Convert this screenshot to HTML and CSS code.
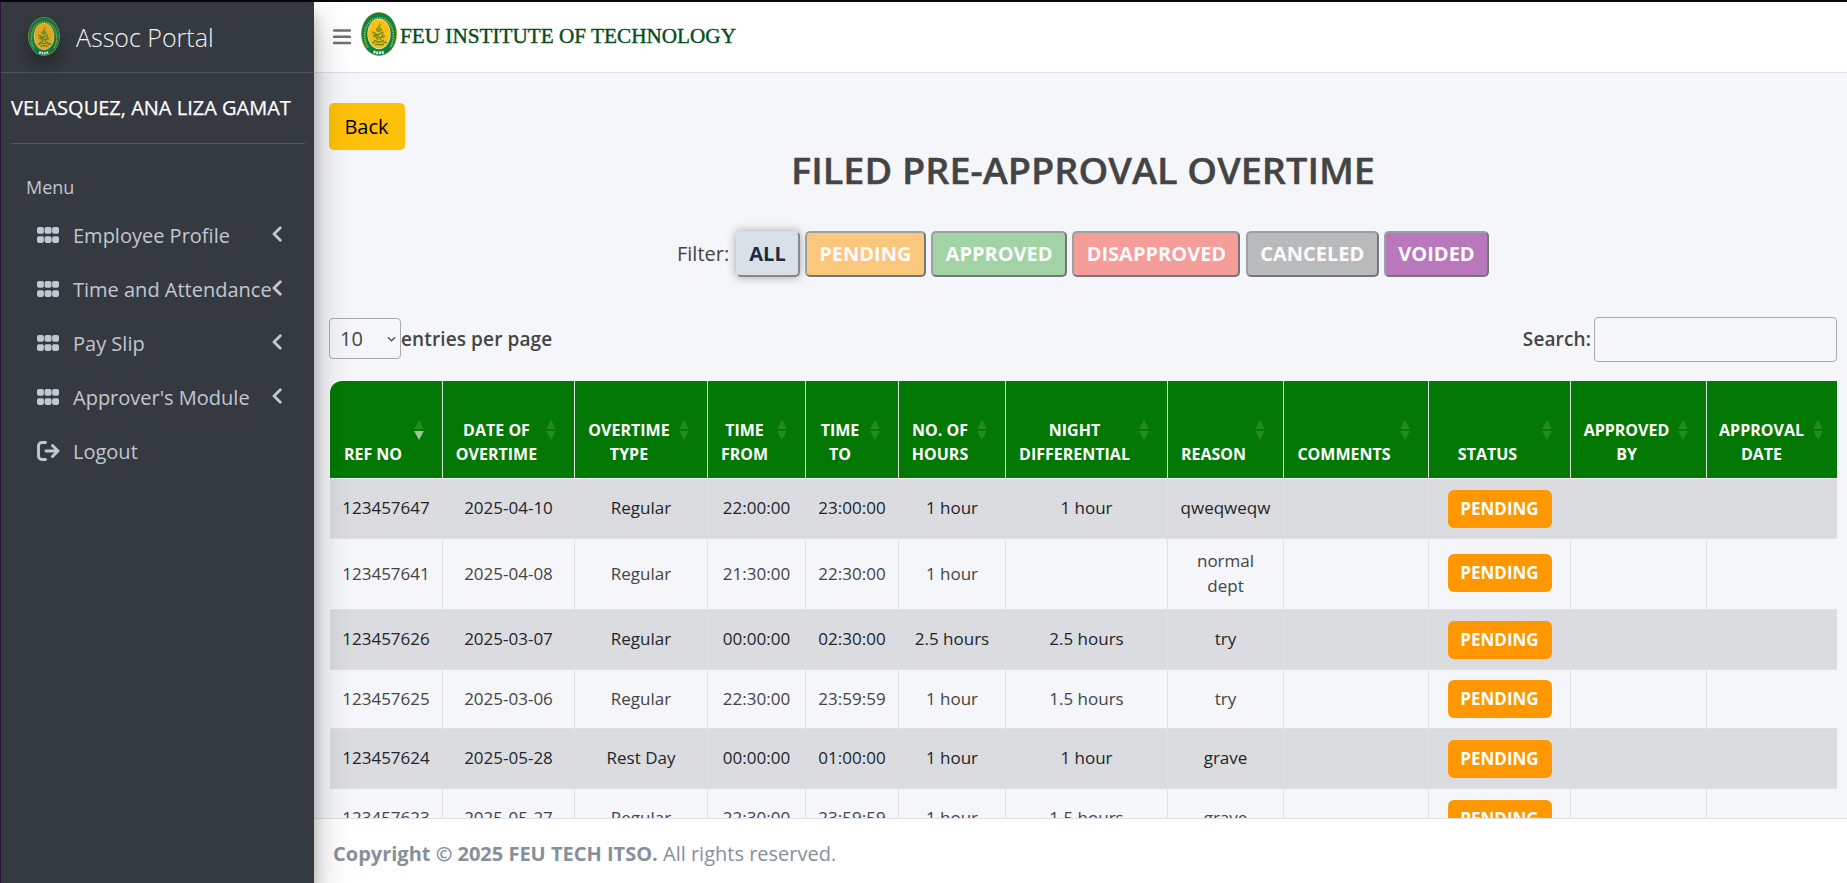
FILE: index.html
```html
<!DOCTYPE html>
<html lang="en">
<head>
<meta charset="utf-8">
<title>Assoc Portal</title>
<link rel="stylesheet" href="styles.css">
</head>
<body>
<svg class="defs" width="0" height="0">
  <defs>
    <symbol id="seal" viewBox="0 0 36 44">
      <ellipse cx="18" cy="22" rx="18" ry="22" fill="#c9b02c"/>
      <ellipse cx="18" cy="22" rx="17.4" ry="21.4" fill="#0b8247"/>
      <path d="M7 35.5A14.400 18 0 1 1 29 35.500" fill="none" stroke="#a5b035" stroke-width="2" stroke-dasharray="1.500 1"/>
      <path d="M12.500 39.800Q18 41.800 23.500 39.800" fill="none" stroke="#e9f3ea" stroke-width="2.800" stroke-dasharray="2 .8"/>
      <ellipse cx="18" cy="22" rx="11.600" ry="15.300" fill="#e8eab0"/>
      <ellipse cx="18" cy="22" rx="10.900" ry="14.600" fill="#fdbc12"/>
      <path d="M18 10.500q3 3 .5 5.500q3.500-.5 2.500 2.500l-2 1.500h-3q-2.500-2.500.5-4.500q2-2 1.500-5z" fill="#8c9b26"/>
      <path d="M11.500 20l5 3 6-3M12 24l4-1 3 3 5-2M13 28q5 4 10 0M14 23l3 5M22 22l-3 6M11 30.500h3M22 30.500h4M14 32.500h9" stroke="#648d2d" stroke-width="1.500" fill="none"/>
    </symbol>
    <symbol id="grid" viewBox="0 0 22 16">
      <g fill="currentColor">
        <rect x="0" y="0" width="6.900" height="6.700" rx="1.800"/><rect x="7.600" y="0" width="6.900" height="6.700" rx="1.800"/><rect x="15.100" y="0" width="6.900" height="6.700" rx="1.800"/>
        <rect x="0" y="9.200" width="6.900" height="6.700" rx="1.800"/><rect x="7.600" y="9.200" width="6.900" height="6.700" rx="1.800"/><rect x="15.100" y="9.200" width="6.900" height="6.700" rx="1.800"/>
      </g>
    </symbol>
    <symbol id="chev" viewBox="0 0 10 16">
      <path d="M8.300 1.700 2 8l6.300 6.300" fill="none" stroke="currentColor" stroke-width="2.800" stroke-linecap="round" stroke-linejoin="round"/>
    </symbol>
    <symbol id="sort" viewBox="0 0 10 20">
      <path d="M5 0l4.800 9H.2z" fill="#248b24"/><path d="M5 20l4.800-9H.2z" fill="currentColor"/>
    </symbol>
  </defs>
</svg>
<div class="app">
  <aside class="sidebar">
    <div class="brand">
      <svg class="brand-logo"><use href="#seal"/></svg>
      <span>Assoc Portal</span>
    </div>
    <div class="user">VELASQUEZ, ANA LIZA GAMAT</div>
    <nav class="menu">
      <div class="menu-header">Menu</div>
      <a class="item"><svg class="grid"><use href="#grid"/></svg><span>Employee Profile</span><svg class="chev"><use href="#chev"/></svg></a>
      <a class="item"><svg class="grid"><use href="#grid"/></svg><span>Time and Attendance</span><svg class="chev"><use href="#chev"/></svg></a>
      <a class="item"><svg class="grid"><use href="#grid"/></svg><span>Pay Slip</span><svg class="chev"><use href="#chev"/></svg></a>
      <a class="item"><svg class="grid"><use href="#grid"/></svg><span>Approver's Module</span><svg class="chev"><use href="#chev"/></svg></a>
      <a class="item"><svg class="out" viewBox="0 0 23 20"><path d="M8.500 1.500H5a3.500 3.500 0 0 0-3.500 3.500v10A3.500 3.500 0 0 0 5 18.500h3.500M9 10h12M15.500 4.500 21 10l-5.500 5.500" fill="none" stroke="currentColor" stroke-width="2.900" stroke-linecap="round" stroke-linejoin="round"/></svg><span>Logout</span></a>
    </nav>
  </aside>
  <div class="page">
    <header class="topbar">
      <svg class="bars" viewBox="0 0 18 16"><path d="M1 1.500h16M1 7.800h16M1 14.100h16" stroke="#6f6f6f" stroke-width="2.500" stroke-linecap="round"/></svg>
      <svg class="top-logo"><use href="#seal"/></svg>
      <svg class="wordmark" viewBox="0 0 336 24"><text x="0" y="18.700" textLength="336" lengthAdjust="spacingAndGlyphs">FEU INSTITUTE OF TECHNOLOGY</text></svg>
    </header>
    <main class="content">
      <button class="back">Back</button>
      <h1 class="title"><svg viewBox="0 0 584 44"><text x="0" y="34" textLength="584" lengthAdjust="spacingAndGlyphs">FILED PRE-APPROVAL OVERTIME</text></svg></h1>
      <div class="filters">
        <span class="filter-label">Filter:</span>
        <button class="filter all">ALL</button>
        <button class="filter pending">PENDING</button>
        <button class="filter approved">APPROVED</button>
        <button class="filter disapproved">DISAPPROVED</button>
        <button class="filter canceled">CANCELED</button>
        <button class="filter voided">VOIDED</button>
      </div>
      <div class="controls">
        <div class="length"><div class="select">10<svg viewBox="0 0 10 6"><path d="M1 1l4 4 4-4" fill="none" stroke="#555" stroke-width="1.600"/></svg></div><span class="entries">entries per page</span></div>
        <label class="search"><span>Search:</span><input type="text"></label>
      </div>
      <table class="grid-table">
        <colgroup><col class="c1"><col class="c2"><col class="c3"><col class="c4"><col class="c5"><col class="c6"><col class="c7"><col class="c8"><col class="c9"><col class="c10"><col class="c11"><col class="c12"></colgroup>
        <thead><tr>
          <th class="sorted">REF NO<svg><use href="#sort"/></svg></th>
          <th>DATE OF<br>OVERTIME<svg><use href="#sort"/></svg></th>
          <th>OVERTIME<br>TYPE<svg><use href="#sort"/></svg></th>
          <th>TIME<br>FROM<svg><use href="#sort"/></svg></th>
          <th>TIME<br>TO<svg><use href="#sort"/></svg></th>
          <th>NO. OF<br>HOURS<svg><use href="#sort"/></svg></th>
          <th>NIGHT<br>DIFFERENTIAL<svg><use href="#sort"/></svg></th>
          <th>REASON<svg><use href="#sort"/></svg></th>
          <th>COMMENTS<svg><use href="#sort"/></svg></th>
          <th>STATUS<svg><use href="#sort"/></svg></th>
          <th>APPROVED<br>BY<svg><use href="#sort"/></svg></th>
          <th>APPROVAL<br>DATE<svg><use href="#sort"/></svg></th>
        </tr></thead>
        <tbody>
          <tr class="mid"><td>123457647</td><td>2025-04-10</td><td>Regular</td><td>22:00:00</td><td>23:00:00</td><td>1 hour</td><td>1 hour</td><td>qweqweqw</td><td></td><td><span class="badge">PENDING</span></td><td></td><td></td></tr>
          <tr class="tall"><td>123457641</td><td>2025-04-08</td><td>Regular</td><td>21:30:00</td><td>22:30:00</td><td>1 hour</td><td></td><td>normal<br>dept</td><td></td><td><span class="badge">PENDING</span></td><td></td><td></td></tr>
          <tr class="mid"><td>123457626</td><td>2025-03-07</td><td>Regular</td><td>00:00:00</td><td>02:30:00</td><td>2.5 hours</td><td>2.5 hours</td><td>try</td><td></td><td><span class="badge">PENDING</span></td><td></td><td></td></tr>
          <tr><td>123457625</td><td>2025-03-06</td><td>Regular</td><td>22:30:00</td><td>23:59:59</td><td>1 hour</td><td>1.5 hours</td><td>try</td><td></td><td><span class="badge">PENDING</span></td><td></td><td></td></tr>
          <tr class="mid"><td>123457624</td><td>2025-05-28</td><td>Rest Day</td><td>00:00:00</td><td>01:00:00</td><td>1 hour</td><td>1 hour</td><td>grave</td><td></td><td><span class="badge">PENDING</span></td><td></td><td></td></tr>
          <tr class="mid"><td>123457623</td><td>2025-05-27</td><td>Regular</td><td>22:30:00</td><td>23:59:59</td><td>1 hour</td><td>1.5 hours</td><td>grave</td><td></td><td><span class="badge">PENDING</span></td><td></td><td></td></tr>
        </tbody>
      </table>
    </main>
    <footer class="footer"><strong>Copyright © 2025 FEU TECH ITSO.</strong> All rights reserved.</footer>
  </div>
</div>
</body>
</html>
```
FILE: styles.css
```css
* { box-sizing: border-box; }
body { margin: 0; font: 20px/30px "Open Sans", sans-serif; color: #444; background: #f4f6f9; overflow: hidden; }
.defs { display: block; }
.app { display: flex; height: 883px; border-top: 2px solid #08060c; }
.sidebar { width: 314px; flex: none; background: #343a40; border-left: 1px solid #2b1240; color: #c2c7d0; z-index: 2; box-shadow: 0 17.5px 35px rgba(0,0,0,.25), 0 12.5px 12.5px rgba(0,0,0,.22); }
.brand { display: flex; align-items: center; height: 71px; padding-left: 27px; gap: 16px; border-bottom: 1px solid #4b545c; font-size: 25px; font-weight: 300; color: #f2f3f3; }
.brand span { margin-top: -1px; }
.brand-logo { width: 32px; height: 39px; border-radius: 50%; opacity: .85; box-shadow: 0 10px 15px rgba(0,0,0,.35); margin-bottom: 1px; }
.user { height: 71px; margin: 0 9px 0 10px; padding-top: 20px; border-bottom: 1px solid #4f5962; color: #fff; font-size: 20px; white-space: nowrap; -webkit-text-stroke: .25px #fff; }
.menu { padding: 28px 10px 0; }
.menu-header { padding-left: 15px; font-size: 18px; height: 37px; }
.item { display: flex; align-items: center; height: 54px; padding-left: 26px; position: relative; white-space: nowrap; }
.item .grid { width: 22px; height: 16px; margin-bottom: 3px; }
.item span { margin-left: 14px; }
.item .out { width: 23px; height: 20px; margin: 0 -1px 3px 0; }
.chev { position: absolute; right: 22px; top: 17px; width: 10px; height: 16px; }
.page { flex: 1; display: flex; flex-direction: column; min-width: 0; }
.topbar { height: 71px; flex: none; background: #fff; border-bottom: 1px solid #dee2e6; display: flex; align-items: flex-start; }
.bars { width: 18px; height: 16px; margin: 27px 0 0 19px; }
.top-logo { width: 36px; height: 44px; margin: 10px 0 0 10px; }
.wordmark { width: 336px; height: 24px; margin: 22px 0 0 3px; overflow: visible; }
.wordmark text { font: 21px "Liberation Serif", serif; fill: #064d1d; stroke: #064d1d; stroke-width: .4; }
.content { flex: 1; min-height: 0; overflow: hidden; padding: 30px 10px 0 15px; display: flex; flex-direction: column; }
.back { width: 76px; height: 47px; flex: none; border: 0; border-radius: 5px; background: #ffc107; color: #000; font: 20px/30px "Open Sans", sans-serif; padding: 0 1px 0 0; }
.title { height: 44px; flex: none; margin: 0; display: flex; justify-content: center; }
.title svg { width: 584px; height: 44px; overflow: visible; }
.title text { font: 600 36px "Open Sans", sans-serif; fill: #444; stroke: #444; stroke-width: .4; stroke-linejoin: round; }
.filters { display: flex; justify-content: center; align-items: center; height: 46px; flex: none; margin-top: 37px; gap: 5.3px; }
.filter { height: 46px; border: 2px solid; border-color: #9da1a5 #747779 #747779 #9da1a5; border-radius: 5px; padding: 0; font: 700 20px/30px "Open Sans", sans-serif; color: #fbfbfd; }
.filter.all { width: 64px; background: #dae0e8; color: #1c2b40; border-color: #dae0e8 #85898e #85898e #dae0e8; box-shadow: 0 0 10px rgba(0,0,0,.35); }
.pending { width: 121px; background: #fbc77d; }
.approved { width: 136px; background: #a1d3a5; }
.disapproved { width: 168px; background: #f59d98; }
.canceled { width: 133px; background: #b9babc; }
.voided { width: 105px; background: #b878bb; }
.filter-label { white-space: nowrap; margin-right: 1px; }
.controls { display: flex; justify-content: space-between; align-items: center; height: 46px; flex: none; margin-top: 39px; }
.length { display: flex; align-items: center; }
.select { width: 72px; height: 41px; margin-bottom: 1px; border: 1px solid #aaa; border-radius: 4px; padding: 0 4px 0 10px; display: flex; align-items: center; justify-content: space-between; }
.select svg { width: 9px; height: 6px; }
.entries, .search span { font-weight: 600; font-size: 19px; white-space: nowrap; letter-spacing: .12px; }
.search { display: flex; align-items: center; gap: 3px; }
.search input { width: 243px; height: 45px; margin: 0; border: 1px solid #aaa; border-radius: 4px; background: transparent; }
.grid-table { table-layout: fixed; width: 1507px; margin: 19px 0 0 1px; border-collapse: separate; border-spacing: 0; flex: none; font-size: 17px; line-height: 25px; text-align: center; }
.c1 { width: 113px; }
.c2 { width: 132px; }
.c3 { width: 133px; }
.c4 { width: 98px; }
.c5 { width: 93px; }
.c6 { width: 107px; }
.c7 { width: 162px; }
.c8 { width: 116px; }
.c9 { width: 145px; }
.c10 { width: 142px; }
.c11 { width: 136px; }
.c12 { width: 130px; }
th { height: 98px; position: relative; vertical-align: bottom; background: #047804; color: #fff; font-size: 16px; line-height: 24px; padding: 0 24px 12px 0; border-right: 1px solid #dee2e6; border-bottom: 1px solid #f4f6f9; white-space: nowrap; }
th:first-child { border-top-left-radius: 12px; padding-right: 26px; }
th svg { position: absolute; right: 18px; top: 39px; width: 10px; height: 20px; color: #248b24; }
th.sorted svg { color: #9bc99b; }
th:last-child { padding-right: 21px; }
th:last-child svg { right: 14px; }
td { height: 59px; padding: 0 0 1px; border-right: 1px solid #dee2e6; border-bottom: 1px solid #dee2e6; vertical-align: middle; }
th:last-child, td:last-child { border-right: 0; }
.mid td { height: 60px; padding-bottom: 2px; }
.tall td { height: 71px; padding-bottom: 2px; }
tbody tr:nth-child(odd) td { background: #dbdce0; color: #212529; }
.badge { display: block; margin: 0 auto; width: 104px; height: 38px; line-height: 38px; border-radius: 6px; background: #ff9800; color: #fff; font-weight: 700; font-size: 17px; }
.mid td:nth-child(10) { padding-bottom: 0; }
.footer { height: 65px; flex: none; background: #fff; border-top: 1px solid #dee2e6; padding: 20px 0 0 19px; color: #869099; }
```
